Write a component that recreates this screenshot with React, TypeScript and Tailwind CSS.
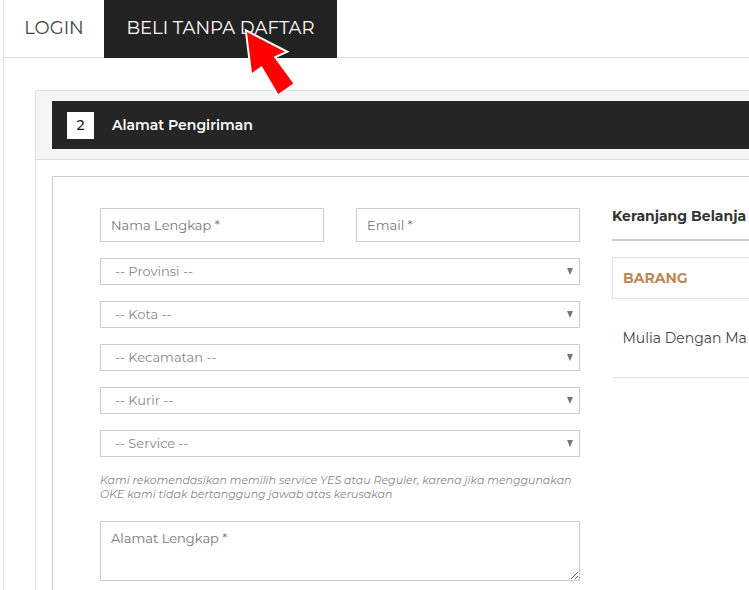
import { useState } from "react";
import { clsx } from "clsx";

const TABS = ["LOGIN", "BELI TANPA DAFTAR"];

const SELECTS = [
  { id: "provinsi", label: "Provinsi" },
  { id: "kota", label: "Kota" },
  { id: "kecamatan", label: "Kecamatan" },
  { id: "kurir", label: "Kurir" },
  { id: "service", label: "Service" },
];

function TextField({ id, label, type = "text" }: { id: string; label: string; type?: string }) {
  return (
    <input
      id={id}
      type={type}
      aria-label={label}
      placeholder={`${label} *`}
      className="h-[34px] w-full min-w-0 border border-[#ccc] bg-white px-[10px] text-[13px] text-[#555] outline-none placeholder:text-[#777]"
    />
  );
}

function SelectField({ id, label }: { id: string; label: string }) {
  return (
    <div className="relative">
      <select
        id={id}
        aria-label={label}
        className="block h-[27px] w-full appearance-none border border-[#ccc] bg-white px-[14px] text-[13px] text-[#888] outline-none"
      >
        <option>{`-- ${label} --`}</option>
      </select>
      <svg
        viewBox="0 0 6 7"
        className="pointer-events-none absolute top-[10px] right-[7px] h-[7px] w-[6px] fill-[#777]"
      >
        <path d="M0 0h6L3 7z" />
      </svg>
    </div>
  );
}

function Cart() {
  return (
    <aside className="w-[137px] shrink-0 text-[#333]">
      <h3 className="border-b-2 border-[#ccc] pb-[15px] text-[14px] leading-[16px] font-bold whitespace-nowrap">
        Keranjang Belanja
      </h3>
      <table className="mt-4 w-full border-collapse text-left whitespace-nowrap">
        <thead>
          <tr className="h-[41px] border-y border-l border-[#e5e5e5]">
            <th className="pl-[10px] text-[14px] font-bold text-[#c08552]">BARANG</th>
          </tr>
        </thead>
        <tbody>
          <tr className="h-[79px] border-b border-[#e5e5e5]">
            <td className="pl-[10px] text-[14px] text-[#444]">Mulia Dengan Ma</td>
          </tr>
        </tbody>
      </table>
    </aside>
  );
}

// penunjuk merah di atas tab aktif
function Pointer() {
  return (
    <svg
      viewBox="0 0 70 80"
      className="pointer-events-none absolute top-5 left-[235px] h-[80px] w-[70px]"
    >
      <path
        d="M12 12L50 31.7L38.7 36.7L58.3 63.5L43.3 74L26.7 46L17 53Z"
        fill="#fe0000"
        stroke="#fff"
        strokeWidth="4"
        paintOrder="stroke"
      />
    </svg>
  );
}

export default function App() {
  const [active, setActive] = useState(1);

  return (
    <div className="relative min-h-screen overflow-hidden bg-white pl-[3px] font-[Montserrat,Inter,'Liberation_Sans',sans-serif]">
      <div className="min-h-screen border-l border-[#ddd]">
        <nav className="flex h-[58px] border-b border-[#ddd]">
          {TABS.map((tab, i) => (
            <button
              key={tab}
              type="button"
              onClick={() => setActive(i)}
              className={clsx(
                "h-[58px] pb-[2px] text-[18px] whitespace-nowrap",
                i === 0 ? "w-[100px]" : "w-[233px]",
                i === active ? "bg-[#222] text-white" : "text-[#444]",
              )}
            >
              {tab}
            </button>
          ))}
        </nav>

        <section className="mt-8 ml-[31px] rounded-tl border-t border-l border-[#ddd]">
          <header className="rounded-tl border-b border-[#ddd] bg-[#f5f5f5] py-[10px] pl-4">
            <div className="flex h-[48px] items-center gap-[18px] bg-[#252525] pl-[15px]">
              <span className="flex h-[27px] w-[27px] items-center justify-center bg-white text-[14px] font-medium text-[#222]">
                2
              </span>
              <h2 className="text-[14px] font-semibold text-white">Alamat Pengiriman</h2>
            </div>
          </header>

          <div className="pt-4 pl-4">
            <div className="flex gap-8 border-t border-l border-[#ccc] pt-[31px] pb-8 pl-[47px]">
              <form className="flex min-w-0 flex-1 flex-col gap-4">
                <div className="grid grid-cols-2 gap-8">
                  <TextField id="nama" label="Nama Lengkap" />
                  <TextField id="email" label="Email" type="email" />
                </div>
                {SELECTS.map((s) => (
                  <SelectField key={s.id} id={s.id} label={s.label} />
                ))}
                <p className="pb-1 text-[11px] leading-[14px] text-[#888] italic">
                  Kami rekomendasikan memilih service YES atau Reguler, karena jika menggunakan OKE
                  kami tidak bertanggung jawab atas kerusakan
                </p>
                <textarea
                  id="alamat"
                  aria-label="Alamat Lengkap"
                  placeholder="Alamat Lengkap *"
                  className="h-[60px] w-full resize border border-[#ccc] bg-white px-[10px] py-[7px] text-[13px] text-[#555] outline-none placeholder:text-[#777]"
                />
              </form>
              <Cart />
            </div>
          </div>
        </section>
      </div>
      <Pointer />
    </div>
  );
}
